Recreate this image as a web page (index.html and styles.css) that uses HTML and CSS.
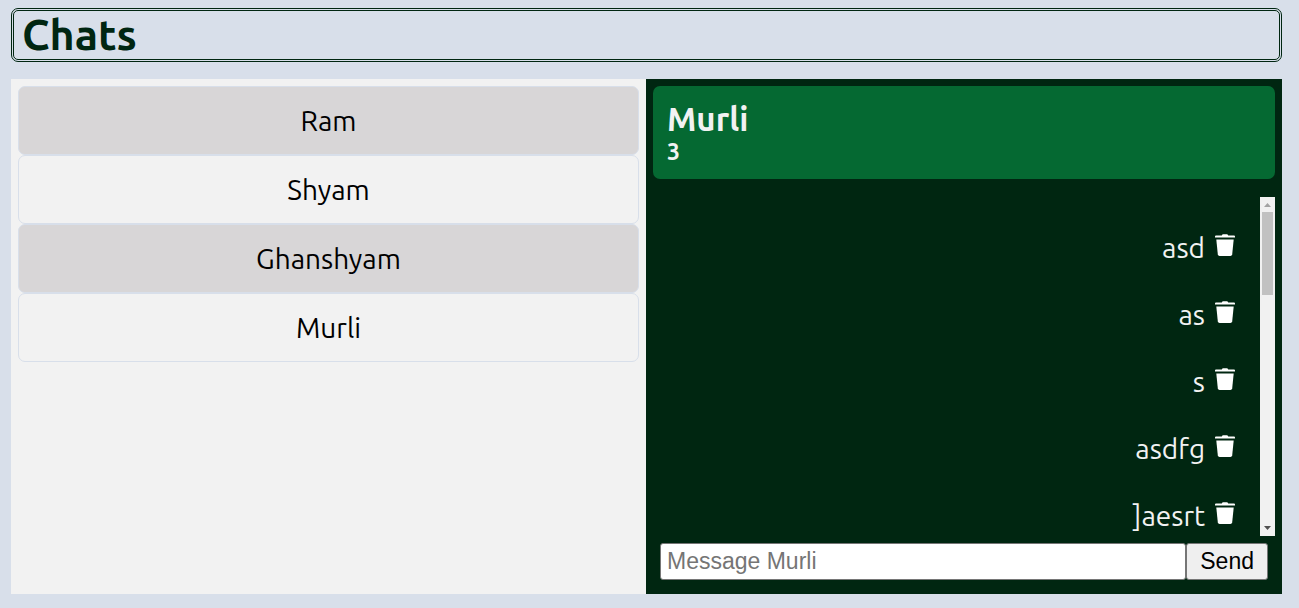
FILE: index.html
```html
<!DOCTYPE html>
<html lang="en">
<head>
<meta charset="utf-8">
<meta name="viewport" content="width=device-width, initial-scale=1">
<title>Chats</title>
<link rel="stylesheet" href="styles.css">
</head>
<body>
<svg class="sprite" aria-hidden="true">
  <symbol id="trash" viewBox="0 0 20 23">
    <path d="M1 1.4H6.8Q7.2 0.3 8.2 0.3H11.8Q12.8 0.3 13.2 1.4H19Q20 1.4 20 2.4V3.4H0V2.4Q0 1.4 1 1.4Z"/>
    <path d="M1.3 5.6H18.7L17.2 20.3Q17 22 15.4 22H4.6Q3 22 2.8 20.3Z"/>
  </symbol>
</svg>
<header class="title-bar"><h1>Chats</h1></header>
<main class="app">
  <nav class="contacts" aria-label="Contacts">
    <button class="contact" type="button">Ram</button>
    <button class="contact" type="button">Shyam</button>
    <button class="contact" type="button">Ghanshyam</button>
    <button class="contact" type="button">Murli</button>
  </nav>
  <section class="chat">
    <header class="chat-header">
      <h2>Murli</h2>
      <p>3</p>
    </header>
    <div class="messages">
      <ul class="message-list">
        <li class="message"><span>asd</span><button class="delete" type="button" aria-label="Delete"><svg class="icon"><use href="#trash"/></svg></button></li>
        <li class="message"><span>as</span><button class="delete" type="button" aria-label="Delete"><svg class="icon"><use href="#trash"/></svg></button></li>
        <li class="message"><span>s</span><button class="delete" type="button" aria-label="Delete"><svg class="icon"><use href="#trash"/></svg></button></li>
        <li class="message"><span>asdfg</span><button class="delete" type="button" aria-label="Delete"><svg class="icon"><use href="#trash"/></svg></button></li>
        <li class="message"><span>]aesrt</span><button class="delete" type="button" aria-label="Delete"><svg class="icon"><use href="#trash"/></svg></button></li>
      </ul>
      <div class="scrollbar" aria-hidden="true">
        <svg class="arrow arrow-up" viewBox="0 0 15 15"><path d="M4 10 7.5 6 11 10Z"/></svg>
        <div class="track"><div class="thumb"></div></div>
        <svg class="arrow arrow-down" viewBox="0 0 15 15"><path d="M4 5 7.5 9 11 5Z"/></svg>
      </div>
    </div>
    <form class="composer">
      <input type="text" placeholder="Message Murli" aria-label="Message Murli">
      <button type="submit">Send</button>
    </form>
  </section>
</main>
</body>
</html>
```

FILE: styles.css
```css
* { box-sizing: border-box; }

body {
  margin: 0;
  padding: 8px 17px 14px 11px;
  height: 100vh;
  display: flex;
  flex-direction: column;
  gap: 17px;
  background: #d8dfea;
  font-family: Ubuntu, "Noto Sans", sans-serif;
  font-size: 28px;
}

h1, h2, p, ul { margin: 0; padding: 0; }

.sprite { display: none; }

.title-bar {
  border: 3px double #002611;
  border-radius: 7px;
  padding: 0 8px 2px;
  color: #002611;
}

.title-bar h1 { font-size: 43px; line-height: 46px; }

.app {
  flex: 1;
  min-height: 0;
  display: grid;
  grid-template-columns: minmax(0, 635fr) minmax(0, 636fr);
}

.contacts {
  display: flex;
  flex-direction: column;
  padding: 7px;
  background: #f2f2f2;
}

.contact {
  height: 69px;
  border: 1px solid #d8dfea;
  border-radius: 7px;
  background: #f2f2f2;
  color: #000;
  font: inherit;
}

.contact:nth-child(odd) { background: #d8d6d7; }

.chat {
  display: flex;
  flex-direction: column;
  min-height: 0;
  padding: 7px 7px 14px;
  background: #002611;
  color: #f2f2f2;
}

.chat-header {
  margin-bottom: 18px;
  padding: 14px;
  border-radius: 7px;
  background: #056932;
}

.chat-header h2 { font-size: 33px; line-height: 38px; }
.chat-header p { font-size: 23px; line-height: 27px; font-weight: bold; }

.messages {
  flex: 1;
  min-height: 0;
  display: flex;
}

.message-list {
  flex: 1;
  min-width: 0;
  overflow: hidden;
  padding: 17px 25px 0;
  list-style: none;
}

.message {
  display: flex;
  justify-content: flex-end;
  align-items: center;
  gap: 10px;
  height: 67px;
}

.delete {
  display: flex;
  padding: 0 0 4px;
  border: 0;
  background: none;
  color: #fff;
}

.icon { width: 20px; height: 23px; fill: currentColor; }

.scrollbar {
  display: flex;
  flex-direction: column;
  width: 15px;
  background: #f1f1f1;
}

.arrow { flex: none; width: 15px; height: 15px; }
.arrow-up { fill: #a3a3a3; }
.arrow-down { fill: #505050; }

.track { flex: 1; padding: 0 2px; }
.thumb { height: 27%; background: #c1c1c1; }

.composer {
  display: flex;
  margin: 7px 7px 0;
}

.composer input,
.composer button {
  height: 37px;
  border: 1px solid #767676;
  border-radius: 3px;
  font-family: "Liberation Sans", Arial, sans-serif;
  font-size: 23px;
}

.composer input {
  flex: 1;
  min-width: 0;
  padding: 0 6px;
  background: #fff;
}

.composer input::placeholder { color: #757575; }

.composer button {
  padding: 0 13px;
  background: #efefef;
  color: #000;
}
```
